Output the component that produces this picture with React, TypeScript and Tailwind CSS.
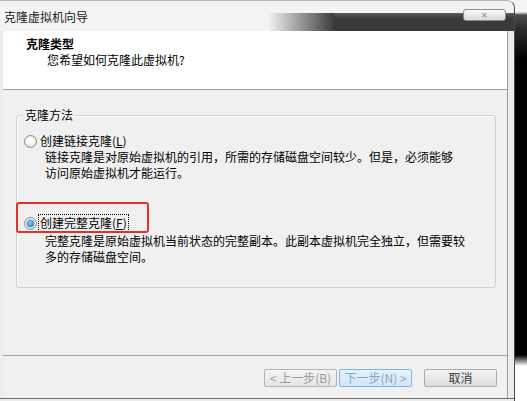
const Radio = ({ checked }: { checked?: boolean }) => (
  <span className="flex h-[13px] w-[13px] shrink-0 items-center justify-center rounded-full border border-[#8a8c8e] bg-[radial-gradient(circle_at_50%_40%,#ffffff_20%,#d2d4d6)]">
    {checked && (
      <span className="h-[7px] w-[7px] rounded-full bg-[radial-gradient(circle_at_45%_40%,#8fd0f8,#1a5a9c)] shadow-[0_0_0_1px_#a6cdeb]" />
    )}
  </span>
);

const Button = ({ label, kind }: { label: string; kind: 'off' | 'focus' | 'normal' }) => {
  const look =
    kind === 'focus'
      ? 'border-[#7eb4ea] bg-[linear-gradient(#e5f3fc,#cfe7f8)] text-[#86a6c6]'
      : kind === 'off'
        ? 'border-[#b2b4b6] bg-[linear-gradient(#f5f5f5,#e4e4e4)] text-[#9c9c9c]'
        : 'border-[#acacac] bg-[linear-gradient(#f4f4f4,#dcdcdc)] text-[#3a3a3a]';
  return (
    <div className={`flex h-[18px] w-[73px] items-center justify-center rounded-[2px] border text-[12px] leading-none ${look}`}>
      {label}
    </div>
  );
};

export default function App() {
  return (
    <div className="flex h-[401px] w-[527px] overflow-hidden bg-white font-['Noto_Sans_CJK_SC','Noto_Sans',sans-serif] text-[12px] text-black">
      {/* window */}
      <div className="flex h-full w-[515px] shrink-0 flex-col rounded-tr-[8px] border-r border-t border-r-[#4a4a4a] border-t-[#b4b4b4] bg-[#ececec]">
        {/* title bar: light glass, the dark desktop shows through its lower right part */}
        <div className="flex h-[30px] shrink-0 overflow-hidden rounded-tr-[8px]">
          <div className="w-[268px] shrink-0 bg-[#f3f3f3] pl-[4px] pt-[8px] text-[12px] leading-[16px] text-[#1a1a1a]">
            克隆虚拟机向导
          </div>
          <div className="relative flex flex-1 flex-col">
            <div className="h-[12px] shrink-0 bg-[#f3f3f3]" />
            <div className="flex flex-1">
              <div className="w-[66px] bg-[linear-gradient(to_right,#f3f3f3,#3c3c3c)]" />
              <div className="flex-1 bg-[linear-gradient(#5e5e5e,#3a3a3a_5px,#383838)]" />
            </div>
            <div className="absolute right-[8px] top-[8px] flex h-[12px] w-[43px] items-center justify-center rounded-[3px] border border-[#8c8c8c] bg-[linear-gradient(#fbfbfb,#d8d8d8)] text-[8px] leading-none text-[#8a8a8a]">
              ✕
            </div>
          </div>
        </div>

        {/* content */}
        <div className="ml-[3px] mr-[6px] flex flex-1 flex-col border-r border-[#9c9c9c]">
          {/* header */}
          <div className="h-[59px] shrink-0 border-b border-[#a0a0a0] bg-white pt-[5px]">
            <div className="pl-[23px] text-[12px] font-bold leading-[16px]">克隆类型</div>
            <div className="pl-[44px] text-[12px] leading-[16px]">您希望如何克隆此虚拟机?</div>
          </div>

          {/* body */}
          <div className="h-[265px] shrink-0 bg-[#f0f0f0] pt-[17px]">
            <fieldset className="ml-[13px] h-[181px] w-[480px] rounded-[3px] border border-[#d0d0d0] shadow-[inset_1px_1px_0_#ffffff]">
              <legend className="ml-[6px] px-[2px] text-[12px] leading-[16px]">克隆方法</legend>

              <div className="mt-[10px] flex items-center gap-[3px] pl-[7px] leading-[16px]">
                <Radio />
                <span>
                  创建链接克隆(<span className="underline">L</span>)
                </span>
              </div>
              <div className="pl-[28px] leading-[16px]">
                <div>链接克隆是对原始虚拟机的引用，所需的存储磁盘空间较少。但是，必须能够</div>
                <div>访问原始虚拟机才能运行。</div>
              </div>

              <div className="relative mt-[33px] flex items-center gap-[1px] pl-[7px] leading-[16px]">
                <div className="absolute left-[-1px] top-[-12px] h-[31px] w-[133px] rounded-[3px] border-2 border-[#e8302a]" />
                <Radio checked />
                <span className="border border-dotted border-black pl-[1px] pr-[1px]">
                  创建完整克隆(<span className="underline">F</span>)
                </span>
              </div>
              <div className="mt-[1px] pl-[28px] leading-[16px]">
                <div>完整克隆是原始虚拟机当前状态的完整副本。此副本虚拟机完全独立，但需要较</div>
                <div>多的存储磁盘空间。</div>
              </div>
            </fieldset>
          </div>

          {/* footer */}
          <div className="flex flex-1 flex-col border-t border-[#a0a0a0] bg-[#f0f0f0]">
            <div className="flex flex-1 items-start justify-end pr-[10px] pt-[13px]">
              <div className="flex gap-[2px]">
                <Button label="< 上一步(B)" kind="off" />
                <Button label="下一步(N) >" kind="focus" />
              </div>
              <div className="ml-[12px]">
                <Button label="取消" kind="normal" />
              </div>
            </div>
          </div>
        </div>
        <div className="h-[3px] shrink-0 border-t border-[#6e6e6e] bg-[#ececec]" />
      </div>

      {/* desktop behind */}
      <div className="h-full flex-1 bg-[linear-gradient(to_bottom,#f4f4f4_0px,#f4f4f4_12px,#4a4a4a_15px,#2a2a2a_30px,#000000_60px,#000000_355px,#ffffff_366px)]" />
    </div>
  );
}
